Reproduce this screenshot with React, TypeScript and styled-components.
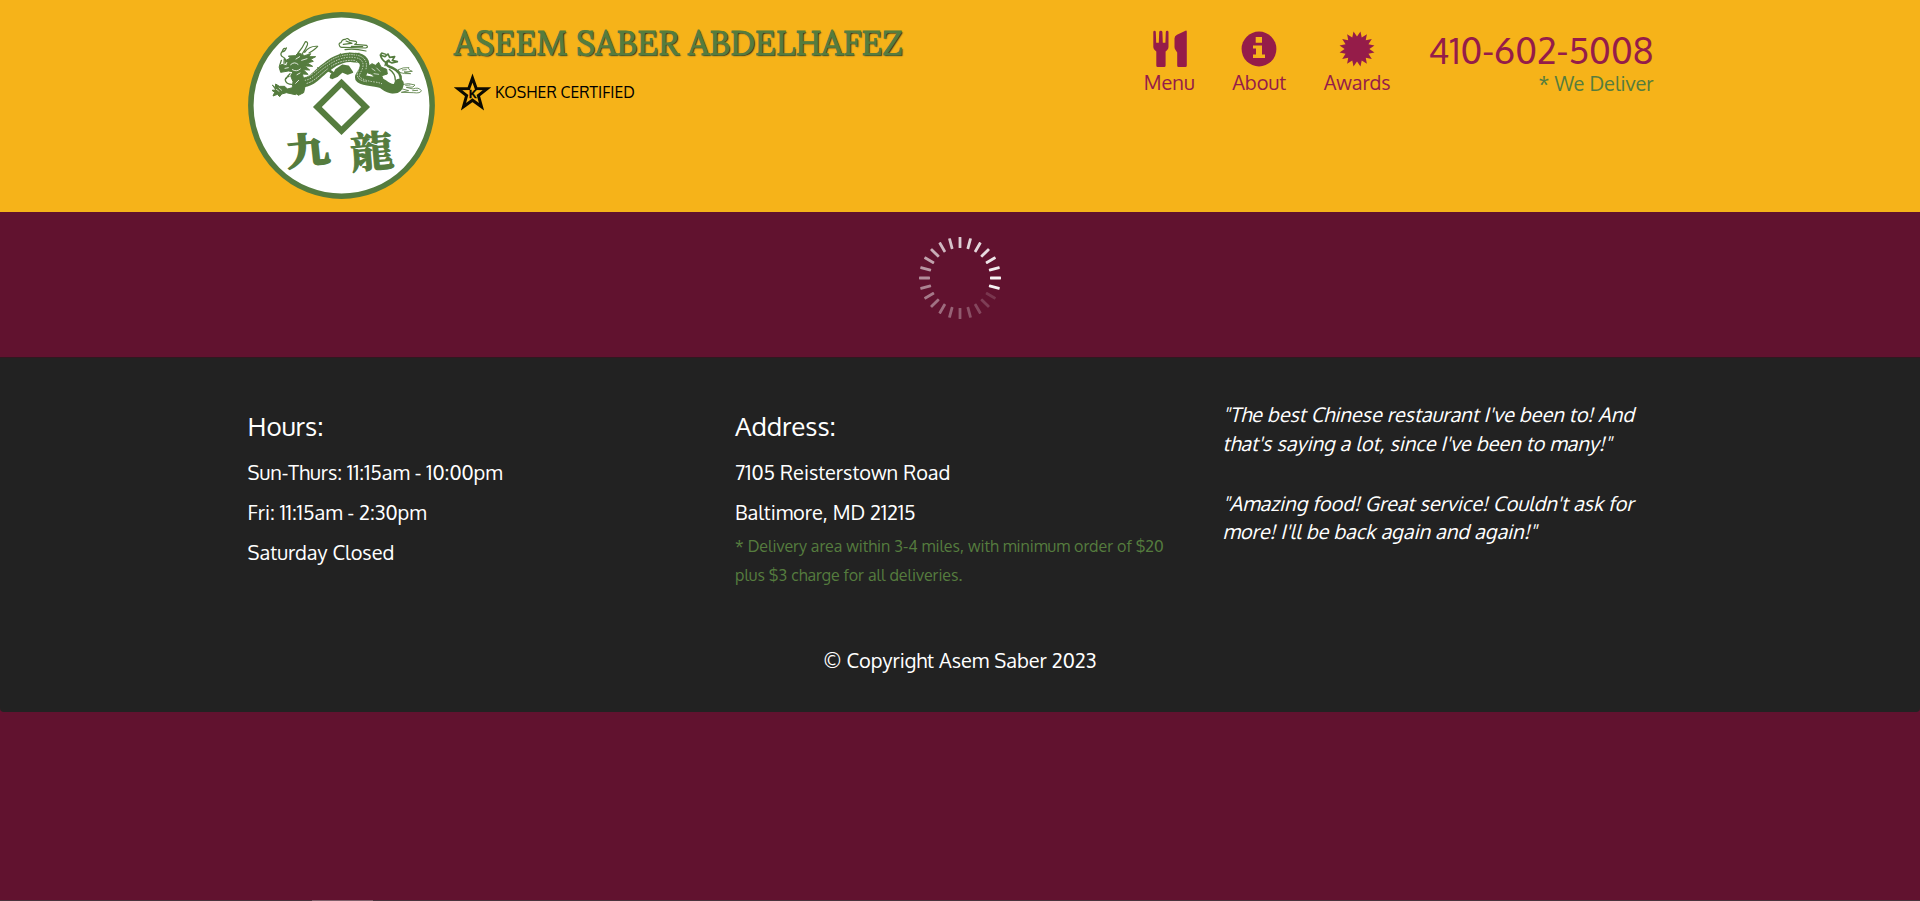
import React from "react";
import styled, { createGlobalStyle } from "styled-components";

const GlobalStyle = createGlobalStyle`
  * { box-sizing: border-box; }
  body {
    margin: 0;
    background: #61122f;
    font-family: Oxygen, "Open Sans", "Noto Sans", sans-serif;
    font-size: 20px;
    line-height: 1.42857;
    color: #fff;
  }
  a { color: inherit; text-decoration: none; }
  p, h1, h4, ul { margin: 0; padding: 0; font-weight: 400; }
`;

const Page = styled.div`
  height: 901px;
  display: flex;
  flex-direction: column;
  overflow: hidden;
`;

const Header = styled.header`
  height: 212px;
  flex: none;
  background: #f6b319;
`;

const Container = styled.div`
  width: 1462.5px;
  margin: 0 auto;
  padding: 0 18.75px;
  display: flex;
`;

const LogoLink = styled.a`
  display: block;
  margin: 12px 19.5px 0 0;
  width: 187px;
  height: 187px;
  svg { display: block; }
`;

const Brand = styled.div`
  padding-top: 25px;
  flex: 1;
`;

const BrandName = styled.h1`
  font-family: Lora, "Liberation Serif", serif;
  font-size: 33.75px;
  line-height: 36px;
  white-space: nowrap;
  color: #557c3e;
  -webkit-text-stroke: 1.1px #557c3e;
  text-shadow: 1.25px 1.25px 1.25px #222;
`;

const Kosher = styled.p`
  display: flex;
  align-items: center;
  margin-top: 12px;
  height: 39px;
  font-size: 15.75px;
  line-height: 22px;
  color: #000;
  svg { margin-right: 4px; }
  span { padding-bottom: 1px; }
`;

const NavList = styled.ul`
  display: flex;
  list-style: none;
  padding-top: 27px;
  margin-right: 19px;
`;

const NavItem = styled.li`
  padding: 0 18.75px;
  display: flex;
  flex-direction: column;
  align-items: center;
  color: #951c49;
  svg { display: block; height: 43px; margin-bottom: -2px; }
  span { line-height: 28px; }
`;

const Phone = styled.li`
  padding: 4px 0 0 18.75px;
  text-align: right;
  color: #951c49;
`;

const PhoneNumber = styled.div`
  font-size: 36px;
  line-height: 38px;
`;

const Deliver = styled.div`
  line-height: 28px;
  color: #557c3e;
`;

const Main = styled.main`
  height: 145px;
  flex: none;
  display: flex;
  justify-content: center;
  padding-top: 21px;
`;

const Footer = styled.footer`
  height: 355px;
  flex: none;
  background: #222;
  border-top: 1px solid #301820;
  border-radius: 0 0 4px 4px;
  padding-top: 42px;
`;

const Column = styled.section`
  flex: none;
  width: 487.5px;
  padding-right: 37.5px;
  height: 246px;
`;

const Heading = styled.h4`
  font-size: 26px;
  line-height: 36px;
  margin: 8px 0;
`;

const Line = styled.p`
  line-height: 40px;
`;

const DeliveryNote = styled.p`
  font-size: 16px;
  line-height: 29px;
  color: #557c3e;
`;

const Quote = styled.p`
  margin-bottom: 31.5px;
  line-height: 28.5px;
  font-style: italic;
`;

const Copyright = styled.div`
  text-align: center;
  line-height: 29px;
`;

const BottomEdge = styled.div`
  margin-top: auto;
  height: 1px;
  background: #4b333d;
  padding-left: 312px;
`;

const EdgeHighlight = styled.div`
  width: 61px;
  height: 1px;
  background: #81606b;
`;

const GREEN = "#557c3e";

function Dragon() {
  return (
    <g transform="translate(75 90)" fill="none" stroke={GREEN} strokeLinecap="round" strokeLinejoin="round">
      {/* cloud above the back */}
      <g strokeWidth="3.5">
        <path d="M224 48 Q219 40 228 38 Q231 27 241 28 Q248 22 254 31 L272 34 Q279 39 269 43 L305 46 Q311 52 302 54 L238 52 Q224 53 224 48Z" />
        <path d="M235 43 L258 40 M243 33 L261 40 M240 59 Q265 54 303 63 M259 49 L293 50" />
      </g>
      {/* scaled body */}
      <path d="M108 158 C145 158 160 126 185 111 C210 88 244 78 270 83 C295 83 304 99 296 119 C289 137 280 139 286 145 C305 157 337 151 355 163 C378 181 399 181 402 161" strokeWidth="29" />
      <path d="M120 151 C145 147 160 123 188 107 C212 88 244 78 270 83 C292 85 299 101 291 119 C282 137 279 140 290 145 C311 157 334 154 350 161" stroke="#fff" strokeWidth="2" strokeDasharray="2 6" />
      <path d="M126 160 C151 153 170 129 190 115 C218 93 246 90 268 91 C283 97 284 108 279 124 C271 143 284 151 304 155" stroke="#fff" strokeWidth="2" strokeDasharray="3 5" />
      <path d="M124 140 C148 134 161 112 186 99 C211 78 247 71 271 75 C298 78 308 94 303 117" stroke="#fff" strokeWidth="2" strokeDasharray="2 5" />
      <path d="M147 136 L145 130 M163 119 L158 112 M224 80 L226 71 M250 75 L253 69 M277 76 L281 69 M302 98 L309 94" strokeWidth="3" />
      {/* head */}
      <path d="M61 92 L76 84 L70 78 L91 77 L100 68 L119 77 L137 71 L132 80 L152 80 L137 88 L145 94 L127 99 L143 109 L119 108 L134 120 L115 119 L129 133 L112 132 L115 143 L121 165 L116 188 L100 196 L87 184 L82 169 L84 155 L77 138 L84 125 L70 123 L47 127 L42 110 L51 103 L64 107 L69 98Z" fill={GREEN} strokeWidth="3" />
      <path d="M77 104 Q88 93 99 103 M82 119 Q95 127 106 117 M60 115 L70 113 M110 91 L126 86 M93 87 L104 80 M96 134 L105 129 M92 160 L101 151" stroke="#fff" strokeWidth="2.5" />
      <path d="M99 69 Q113 53 121 35 Q130 35 127 45 Q121 60 112 71 M119 67 Q133 47 158 49 Q151 58 132 69" strokeWidth="3.5" />
      <path d="M64 54 Q60 65 50 66 Q44 76 54 81 Q65 86 62 99 M52 64 Q55 52 62 56 M49 91 L44 107 M58 86 L57 100 M72 139 Q57 143 62 154 Q66 163 80 163 M75 131 Q66 139 64 146" strokeWidth="4" />
      {/* front claw */}
      <path d="M23 166 L31 173 L32 162 L43 169 L59 169 L67 177 L98 169 L108 183 L91 194 L64 188 L50 192 L44 200 L37 193 L24 198 L29 187 L21 181 L32 180Z" fill={GREEN} strokeWidth="3" />
      <path d="M34 178 L42 184 M42 174 L50 181" stroke="#fff" strokeWidth="2" />
      {/* legs */}
      <path d="M213 119 L232 106 L250 109 L262 127 L248 132 L232 125 L216 139 L202 145 L198 136 L207 131Z" fill={GREEN} strokeWidth="5" />
      <path d="M195 111 L192 121 L204 129 L198 142 L207 137" strokeWidth="8" />
      <path d="M309 110 L321 101 L331 106 L341 97 L348 111 L365 118 L367 132 L350 137 L355 150 L332 146 L321 133 L309 129Z" fill={GREEN} strokeWidth="3" />
      <path d="M321 116 L330 122 M335 114 L345 124 M327 131 L341 133" stroke="#fff" strokeWidth="2" />
      {/* tail */}
      <path d="M371 92 Q352 103 381 113 Q410 127 407 150 Q405 178 382 186" strokeWidth="8" />
      <path d="M366 100 Q350 91 346 75 L360 80 L369 72 L374 82 L389 80 L382 91 L397 95 L381 99 L370 94" strokeWidth="5" />
      <path d="M351 77 Q345 72 350 69 L363 73 M373 118 Q391 130 391 151 M363 96 L360 107" strokeWidth="4" />
      {/* tail flames */}
      <path d="M400 119 Q414 111 432 113 Q427 118 442 124 L417 126 L437 131 Q416 132 406 128Z M412 120 L424 119" strokeWidth="2.5" />
      <path d="M410 164 Q431 157 450 165 L444 171 L424 172 L444 177 Q461 170 469 182 Q467 191 445 188 L409 187 L431 182 L409 176 M422 166 L435 165 M443 182 L458 181" strokeWidth="2.5" />
    </g>
  );
}

function Logo() {
  return (
    <svg width="187" height="187" viewBox="24 36 561 561">
      <circle cx="304.5" cy="316.5" r="272" fill="#fff" stroke={GREEN} strokeWidth="16.5" />
      <Dragon />
      <path d="M304.500 249 L377 321 L304.500 392 L232 321Z" fill="none" stroke={GREEN} strokeWidth="18.5" />
      <g fill={GREEN} stroke={GREEN} fontFamily='"Noto Serif CJK TC", "Noto Serif CJK SC", "Noto Sans CJK TC", serif' fontWeight="700" fontSize="130" textAnchor="middle">
        <text transform="translate(208 491) rotate(-6) scale(1 .84)" strokeWidth="7">九</text>
        <text transform="translate(400 501) rotate(-5) scale(1 .98)" strokeWidth="3">龍</text>
      </g>
    </svg>
  );
}

function KosherStar() {
  return (
    <svg width="37" height="39" viewBox="0 0 37 38" preserveAspectRatio="none">
      <path d="M18.500 5 L22.200 15.200 L33 15.400 L24.400 22 L27.500 32.800 L18.500 26.500 L9.500 32.800 L12.600 22 L4 15.400 L14.800 15.200Z" fill="none" stroke="#0c0a00" strokeWidth="3" />
      <text x="18.700" y="24.600" textAnchor="middle" fontFamily='"Liberation Sans", sans-serif' fontWeight="700" fontSize="10.500" stroke="#000" strokeWidth=".4">K</text>
    </svg>
  );
}

function CutleryIcon() {
  return (
    <svg width="36" height="43" viewBox="-2 0 36 43" fill="currentColor">
      <path d="M.3 5 Q.4 3.700 1.500 3.700 Q2.700 3.700 2.800 5 L3.200 15.700 H5.800 L6.200 5 Q6.300 3.700 7.800 3.700 Q9.300 3.700 9.400 5 L9.800 15.700 H12.400 L12.800 5 Q12.900 3.700 14.200 3.700 Q15.400 3.700 15.500 5 V20 Q15.500 22 14 23.200 L12.600 24.500 V38.500 Q12.600 40 11.200 40 H4.700 Q3.300 40 3.300 38.500 V24.500 L1.700 23 Q.3 21.700 .3 20Z" />
      <path d="M32.500 3.700 Q33.800 3.300 33.800 4.700 V38.500 Q33.800 40 32.400 40 H25.500 Q24.200 40 24.200 38.500 V25.500 L22.400 22.800 Q21.500 21.400 21.500 20 V11.500 Q21.500 9 24 7.700Z" />
    </svg>
  );
}

function InfoIcon() {
  return (
    <svg width="36" height="43" viewBox="0 0 36 43">
      <circle cx="18" cy="22" r="17.400" fill="currentColor" />
      <path d="M14.700 10 H21 V15.700 H14.700Z M12 18.500 H21 V27.500 H24 V31 H12 V27.500 H15 V21.500 H12Z" fill="#f6b319" />
    </svg>
  );
}

function CertificateIcon() {
  const points = Array.from({ length: 32 }, (_, i) => {
    const angle = ((i + 1) * Math.PI) / 16;
    const radius = i % 2 ? 12.4 : 17.8;
    return `${18 + radius * Math.sin(angle)},${22 - radius * Math.cos(angle)}`;
  }).join(" ");
  return (
    <svg width="36" height="43" viewBox="0 0 36 43">
      <polygon points={points} fill="currentColor" />
    </svg>
  );
}

/* opacity of each tick, clockwise from the top */
const TICKS = [0.83, 0.86, 0.88, 0.9, 0.94, 0.97, 1, 1, 0.16, 0.2, 0.24, 0.28, 0.32, 0.36, 0.4, 0.43, 0.46, 0.5, 0.54, 0.59, 0.64, 0.69, 0.74, 0.79];

function Spinner() {
  return (
    <svg width="90" height="90" viewBox="-45 -45 90 90">
      {TICKS.map((opacity, i) => (
        <rect key={i} x="-1.4" y="-41" width="2.800" height="11" rx=".6" fill="#fff" opacity={opacity * 0.95} transform={`rotate(${i * 15})`} />
      ))}
    </svg>
  );
}

export default function App() {
  return (
    <Page>
      <GlobalStyle />
      <Header>
        <Container>
          <LogoLink href="#"><Logo /></LogoLink>
          <Brand>
            <BrandName>ASEEM SABER ABDELHAFEZ</BrandName>
            <Kosher><KosherStar /><span>KOSHER CERTIFIED</span></Kosher>
          </Brand>
          <NavList>
            <NavItem><CutleryIcon /><span>Menu</span></NavItem>
            <NavItem><InfoIcon /><span>About</span></NavItem>
            <NavItem><CertificateIcon /><span>Awards</span></NavItem>
            <Phone>
              <PhoneNumber>410-602-5008</PhoneNumber>
              <Deliver>* We Deliver</Deliver>
            </Phone>
          </NavList>
        </Container>
      </Header>
      <Main><Spinner /></Main>
      <Footer>
        <Container>
          <Column>
            <Heading>Hours:</Heading>
            <Line>Sun-Thurs: 11:15am - 10:00pm</Line>
            <Line>Fri: 11:15am - 2:30pm</Line>
            <Line>Saturday Closed</Line>
          </Column>
          <Column>
            <Heading>Address:</Heading>
            <Line>7105 Reisterstown Road</Line>
            <Line>Baltimore, MD 21215</Line>
            <DeliveryNote>* Delivery area within 3-4 miles, with minimum order of $20 plus $3 charge for all deliveries.</DeliveryNote>
          </Column>
          <Column>
            <Quote>"The best Chinese restaurant I've been to! And that's saying a lot, since I've been to many!"</Quote>
            <Quote>"Amazing food! Great service! Couldn't ask for more! I'll be back again and again!"</Quote>
          </Column>
        </Container>
        <Copyright>© Copyright Asem Saber 2023</Copyright>
      </Footer>
      <BottomEdge><EdgeHighlight /></BottomEdge>
    </Page>
  );
}
